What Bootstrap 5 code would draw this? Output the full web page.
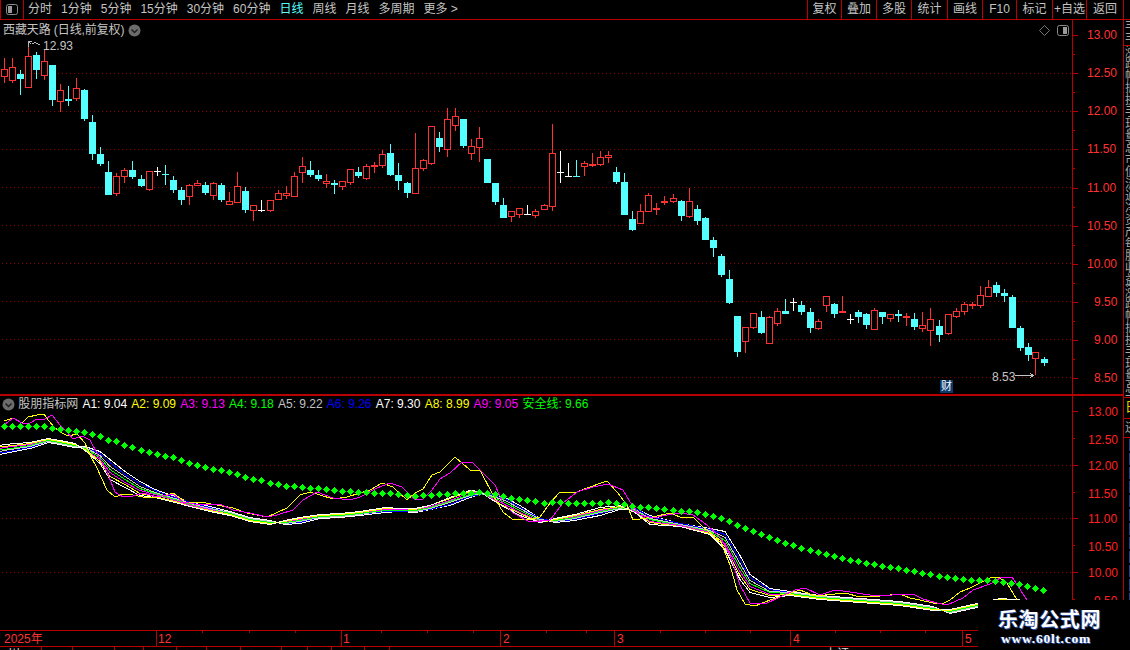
<!DOCTYPE html>
<html lang="zh">
<head>
<meta charset="UTF-8">
<title>西藏天路 日线</title>
<link href="https://cdn.jsdelivr.net/npm/bootstrap@5.3.0/dist/css/bootstrap.min.css" rel="stylesheet">
<style>
    :root { --line-red: #b80000; }
    html, body { background: #000; }
    body {
        width: 1130px; height: 650px; overflow: hidden; color: #c4c4c4;
        font: 12px/14px "Liberation Sans", "Noto Sans CJK SC", sans-serif;
    }
    svg { display: block; }
    svg text { font: 12px "Liberation Sans", "Noto Sans CJK SC", sans-serif; }

    .top-bar { height: 20px; border-bottom: 1px solid var(--line-red); }
    .toggle-cell { width: 24px; border-right: 1px solid var(--line-red); border-left: 1px solid var(--line-red); }
    .period-tabs { padding-left: 4px; gap: 9px; line-height: 19px; }
    .period-tabs .on { color: #54ffff; }
    .tool-btns {
        display: grid; grid-template-columns: 34px 35px 35px 36px 35px 34px 36px 34px 37px;
        border-right: 1px solid var(--line-red); margin-right: 6px; line-height: 19px;
    }
    .tool-btns span { border-left: 1px solid var(--line-red); text-align: center; }

    .charts { width: 1123px; }
    .pane-up { height: 376px; border-bottom: 2px solid var(--line-red); }
    .pane-down { height: 234px; }
    .legend-up { top: 3px; left: 3px; gap: 4px; letter-spacing: -.1px; }
    .legend-down { top: 1px; left: 2px; gap: 4.2px; }
    .legend-down b { font-weight: 400; }
    .legend-name { margin-left: -1px; }
    .date-row { height: 16px; }
    .status-row { height: 4px; border-top: 1px solid var(--line-red); }
    .status-row span { border-right: 1px solid var(--line-red); padding-left: 8px; line-height: 14px; color: #ddd; }

    .side-strip { width: 7px; border-left: 1px solid var(--line-red); }
    .side-cell { padding-left: 1px; line-height: 14px; border-bottom: 1px solid var(--line-red); color: #a8a8a8; }
    .side-cell.c-head { height: 26px; line-height: 12px; }
    .side-cell.c-list { height: 352px; line-height: 12px; }
    .side-cell.c-yel { height: 21px; color: #e6d800; line-height: 18px; font-size: 13px; }
    .side-cell.c-mid { height: 19px; line-height: 18px; }
    .side-cell.c-rest { flex: 1; border: 0; color: #e0e0e0; line-height: 14px; font-size: 13px; }

    .water-mark {
        right: 0; bottom: 0; width: 152px; height: 50px; background: #000; color: #fff;
        font-family: "Liberation Serif", "Noto Sans CJK SC", serif; font-weight: 700;
        text-shadow: 1px 1px 0 #2c4f9c, -1px 0 0 #1e3a7c;
    }
    .water-cn { font-size: 20px; line-height: 24px; letter-spacing: .6px; padding: 8px 0 0 20px; }
    .water-en { font-size: 13.5px; line-height: 16px; letter-spacing: .75px; padding-left: 23px; margin-top: -1px; }
    .cai-tag {
        left: 940px; top: 360px; width: 13px; height: 13px; background: #0a3a6e;
        color: #fff; font-size: 11px; line-height: 13px; text-align: center;
    }
</style>
</head>
<body>

<div class="top-bar d-flex">
    <div class="toggle-cell d-flex align-items-center justify-content-center">
        <svg width="12" height="11" viewBox="0 0 12 11"><rect x=".5" y=".5" width="11" height="10" rx="2" fill="none" stroke="#8a8a8a"/><rect x="2" y="2" width="4" height="7" fill="#9a9a9a"/></svg>
    </div>
    <div class="period-tabs d-flex flex-grow-1 text-nowrap">
        <span>分时</span><span>1分钟</span><span>5分钟</span><span>15分钟</span><span>30分钟</span><span>60分钟</span>
        <span class="on">日线</span><span>周线</span><span>月线</span><span>多周期</span><span>更多 &gt;</span>
    </div>
    <div class="tool-btns text-nowrap">
        <span>复权</span><span>叠加</span><span>多股</span><span>统计</span><span>画线</span><span>F10</span><span>标记</span><span>+自选</span><span>返回</span>
    </div>
</div>

<div class="d-flex">
    <div class="charts flex-shrink-0">
        <div class="pane-up d-flex position-relative">
            <svg id="plotUp" width="1072" height="374" viewBox="0 20 1072 374" shape-rendering="crispEdges"></svg>
            <svg id="axisUp" width="51" height="374" viewBox="1072 20 51 374" shape-rendering="crispEdges"></svg>
            <div class="legend-up position-absolute d-flex align-items-center text-nowrap">
                <span>西藏天路 (日线,前复权)</span>
                <svg width="13" height="13" viewBox="0 0 13 13"><circle cx="6.5" cy="6.5" r="6" fill="#6c6c6c"/><path d="M3.5 5.5l3 3 3-3" fill="none" stroke="#1c1c1c" stroke-width="1.4"/></svg>
            </div>
            <div class="cai-tag position-absolute">财</div>
            <svg class="position-absolute" style="left:1039px;top:5px" width="30" height="11" viewBox="0 0 30 11">
                <path d="M5.5 .5l5 5-5 5-5-5z" fill="none" stroke="#777"/>
                <rect x="18.5" y=".5" width="11" height="10" rx="2" fill="none" stroke="#8a8a8a"/><rect x="24" y="2" width="4" height="7" fill="#9a9a9a"/>
            </svg>
        </div>
        <div class="pane-down d-flex position-relative">
            <svg id="plotDown" width="1072" height="234" viewBox="0 396 1072 234" shape-rendering="crispEdges"></svg>
            <svg id="axisDown" width="51" height="234" viewBox="1072 396 51 234" shape-rendering="crispEdges"></svg>
            <div id="legendDown" class="legend-down position-absolute d-flex align-items-center text-nowrap">
                <svg width="13" height="13" viewBox="0 0 13 13"><circle cx="6.5" cy="6.5" r="6" fill="#6c6c6c"/><path d="M3.5 5.5l3 3 3-3" fill="none" stroke="#1c1c1c" stroke-width="1.4"/></svg>
                <span class="legend-name">股朋指标网</span>
            </div>
        </div>
        <div class="date-row"><svg id="dateAxis" width="1123" height="16" viewBox="0 630 1123 16" shape-rendering="crispEdges"></svg></div>
        <div class="status-row d-flex overflow-hidden text-nowrap">
            <span style="width:42px">川</span><span style="width:31px">·</span><span style="width:42px"></span><span style="width:29px"></span>
            <span style="width:33px"></span><span style="width:30px"></span><span style="width:34px"></span><span style="width:41px"></span>
            <span style="width:26px"></span><span style="width:24px"></span><span style="width:33px"></span><span style="width:25px"></span>
            <span class="flex-grow-1 border-0" style="padding-left:435px">上证</span>
        </div>
    </div>
    <div class="side-strip d-flex flex-column overflow-hidden text-nowrap" style="height:630px">
        <div class="side-cell c-head">丰<br>丰</div>
        <div id="sideList" class="side-cell c-list overflow-hidden"></div>
        <div class="side-cell c-yel overflow-hidden">日</div>
        <div class="side-cell c-mid overflow-hidden">还</div>
        <div id="sideRest" class="side-cell c-rest overflow-hidden"></div>
    </div>
</div>

<div class="water-mark position-absolute text-nowrap">
    <div class="water-cn">乐淘公式网</div>
    <div class="water-en">www.60lt.com</div>
</div>

<script>
const RED = '#ff3232', CYAN = '#54ffff', WHITE = '#ffffff', DIM = '#8a0000', LINE = '#b80000';

// x, high, body top, body bottom, low, type (page pixels)
const candles = [
[4,58,69,77,83,'r'],[12,58,67,81,83,'r'],[20,70,74,79,95,'c'],[28,42,56,88,88,'r'],[36,52,55,70,79,'c'],[44,50,61,76,80,'r'],
[52,65,65,100,106,'c'],[60,84,90,102,112,'r'],[68,86,99,101,106,'t'],[76,78,88,99,101,'r'],[84,89,90,119,121,'c'],[92,115,122,154,160,'c'],
[100,147,154,164,166,'c'],[108,161,172,195,195,'c'],[116,173,176,194,196,'r'],[124,168,170,177,183,'r'],[132,161,170,177,179,'c'],[141,175,179,186,187,'c'],
[149,171,171,190,191,'r'],[157,167,171,172,176,'w'],[165,165,174,175,185,'t'],[173,176,180,190,193,'c'],[181,187,190,200,205,'c'],[189,184,185,197,205,'r'],
[197,180,183,186,186,'r'],[205,182,185,193,195,'c'],[213,182,183,196,200,'r'],[221,183,185,200,202,'c'],[229,192,201,205,205,'r'],[237,172,186,203,203,'r'],
[245,187,191,210,213,'c'],[253,205,205,211,221,'r'],[261,200,210,211,212,'w'],[270,200,200,211,212,'r'],[278,190,193,200,200,'r'],[286,186,193,196,199,'r'],
[294,172,176,197,197,'r'],[302,157,166,173,183,'r'],[310,161,170,175,177,'c'],[318,170,175,179,181,'c'],[326,174,181,184,188,'r'],[334,180,183,185,194,'t'],
[342,181,181,187,190,'r'],[350,169,169,183,185,'r'],[358,167,172,176,178,'c'],[366,164,166,179,180,'r'],[374,162,165,167,173,'d'],[382,150,154,166,168,'r'],
[390,144,153,175,176,'c'],[398,163,175,181,190,'c'],[407,182,183,193,198,'c'],[415,133,168,194,194,'r'],[423,159,160,169,171,'r'],[431,126,126,164,165,'r'],
[439,132,138,147,152,'c'],[447,108,119,150,157,'r'],[455,108,116,126,131,'r'],[463,119,119,146,148,'c'],[471,139,146,154,160,'r'],[479,127,138,148,162,'r'],
[487,159,159,183,183,'c'],[495,183,183,202,205,'c'],[503,198,205,218,218,'c'],[511,211,211,217,222,'r'],[519,208,208,215,218,'r'],[527,205,214,215,215,'w'],
[535,209,211,216,218,'r'],[544,204,205,210,210,'r'],[552,124,153,207,211,'r'],[560,151,172,173,183,'w'],[568,163,176,177,177,'w'],[576,160,176,177,177,'t'],
[584,161,163,167,176,'r'],[592,153,164,165,167,'d'],[600,151,157,165,166,'r'],[608,151,155,158,163,'r'],[616,167,172,182,184,'c'],[624,173,182,215,215,'c'],
[632,211,219,230,231,'c'],[640,204,211,224,224,'r'],[648,193,195,212,212,'r'],[656,203,208,209,215,'d'],[664,196,201,202,205,'d'],[673,194,198,202,203,'r'],
[681,200,201,216,221,'c'],[689,188,201,217,218,'r'],[697,205,209,221,225,'c'],[705,217,218,240,240,'c'],[713,237,240,248,257,'c'],[721,254,256,275,277,'c'],
[729,270,279,303,304,'c'],[737,316,316,352,357,'c'],[745,327,327,342,353,'r'],[753,313,313,328,329,'r'],[761,311,317,333,334,'c'],[769,316,317,344,344,'r'],
[777,308,311,324,326,'r'],[785,299,311,314,314,'c'],[793,298,302,303,311,'w'],[801,301,305,312,315,'c'],[810,308,312,328,333,'c'],[818,319,321,329,330,'r'],
[826,296,296,306,312,'r'],[834,303,304,314,318,'c'],[842,296,311,312,312,'d'],[850,314,319,320,324,'w'],[858,310,312,317,323,'c'],[866,313,314,325,329,'c'],
[874,308,310,330,330,'r'],[882,312,312,317,324,'c'],[890,314,314,319,322,'r'],[898,310,314,316,322,'t'],[906,313,316,317,326,'d'],[914,313,319,327,330,'c'],
[922,312,325,329,332,'r'],[930,308,319,331,346,'r'],[939,320,326,335,342,'c'],[948,314,314,334,335,'r'],[956,308,311,317,318,'r'],[964,302,304,312,315,'r'],
[972,302,304,305,309,'d'],[980,286,295,306,308,'r'],[988,280,287,297,297,'r'],[996,282,285,293,297,'c'],[1004,289,293,296,302,'c'],[1012,295,297,328,328,'c'],
[1020,326,328,348,351,'c'],[1028,343,347,355,361,'c'],[1035,352,352,359,375,'r'],[1044,357,359,363,366,'c']
];

// x, centre y, offset between neighbouring lines (A1..A7)
const ribbon = [
[0,449,1.5],[4,448.5,1.5],[30,445,1],[48,440,.6],[60,442,.6],[75,445,.6],[85,448,-.6],[100,457,-1.9],[110,469,-3.3],[125,479,-2.6],[140,488,-2.3],
[155,493,-1.3],[175,499,-1],[190,504,-.8],[210,508.5,-.7],[230,513,-.7],[250,519,-.7],[270,522,-.6],[285,522,.6],[300,520,.9],[320,516,.6],[340,515,.6],
[360,513,.6],[385,509.5,.8],[400,509.5,.6],[415,510,.6],[430,507,.8],[450,501,1.3],[470,493.5,1.1],[480,492.5,.6],[490,496,-.8],[505,502,-1.8],[520,510,-1.7],
[540,520,-.8],[555,520,.6],[575,517,1.1],[600,511,1.2],[620,507,.7],[635,510,-.8],[650,519,-1.5],[680,524.5,-.6],[710,531,-1],[725,540,-3],[740,567,-4],
[750,583,-3],[770,592,-1.5],[790,593,-.6],[820,597,-.6],[860,600,-.6],[900,603,-.6],[933,608,-.6],[950,611,.6],[977,605,.7],[1000,600,.6],[1040,603,.6]
];

const lineA8 = [[4,421],[13,418],[22,423],[28,417],[37,415],[44,414],[48,420],[55,428],[62,433],[68,436],[77,434],[85,443],[90,455],[97,468],[107,490],[115,497],[123,494],[133,495],[143,497],[160,497],[173,493],[187,503],[200,502],[217,505],[233,508],[247,513],[267,517],[287,508],[300,495],[310,492],[333,499],[347,497],[360,493],[370,490],[382,483],[393,487],[407,500],[415,493],[423,489],[432,475],[440,472],[455,457],[470,470],[480,470],[493,495],[503,512],[512,519],[527,520],[540,517],[550,503],[560,492],[577,492],[587,488],[607,481],[617,492],[627,505],[633,520],[647,518],[653,517],[670,513],[680,517],[693,517],[703,527],[713,535],[720,540],[730,565],[737,590],[745,604],[755,606],[770,600],[785,595],[800,590],[815,596],[825,595],[845,593],[860,597],[880,596],[900,594],[910,598],[920,600],[933,603],[942,604],[950,600],[960,592],[970,588],[980,583],[990,578],[998,577],[1007,583],[1017,600],[1030,620]];
const lineA9 = [[4,425],[13,418],[22,423],[30,423],[37,419],[45,419],[52,415],[60,425],[67,432],[73,439],[82,436],[90,440],[98,455],[107,472],[115,492],[123,497],[133,496],[143,493],[157,497],[173,494],[183,502],[200,505],[220,504],[233,510],[250,513],[267,517],[277,515],[293,510],[303,500],[317,492],[333,498],[350,500],[360,497],[377,488],[390,483],[402,487],[415,500],[423,499],[432,490],[440,479],[450,473],[462,462],[473,463],[483,473],[495,485],[503,503],[513,513],[530,522],[550,520],[563,503],[577,492],[593,487],[608,484],[623,490],[630,502],[640,515],[653,518],[667,515],[680,513],[693,515],[707,525],[720,537],[730,555],[740,585],[750,603],[765,604],[780,597],[795,590],[805,588],[820,595],[835,590],[850,592],[870,595],[885,596],[900,594],[915,595],[923,599],[937,603],[947,605],[963,598],[973,590],[990,584],[1002,577],[1012,577],[1027,600],[1040,620]];

const safeLine = [[4,426],[12,426],[20,426],[28,426],[36,426],[44,426],[52,428],[60,429],[68,430],[76,431],[84,432],[92,434],[100,436],[108,440],[116,441],[124,445],[132,447],[141,450],[149,452],[157,454],[165,456],[173,457],[181,460],[189,463],[197,465],[205,467],[213,469],[221,470],[229,472],[237,474],[245,477],[253,479],[261,480],[270,483],[278,484],[286,486],[294,486],[302,487],[310,488],[318,488],[326,489],[334,490],[342,491],[350,491],[358,492],[366,492],[374,493],[382,493],[390,493],[398,494],[407,495],[415,496],[423,495],[431,495],[439,494],[447,494],[455,493],[463,493],[471,493],[479,492],[487,493],[495,494],[503,496],[511,498],[519,499],[527,500],[535,501],[544,503],[552,502],[560,502],[568,503],[576,503],[584,503],[592,503],[600,503],[608,502],[616,503],[624,504],[632,506],[640,507],[648,507],[656,508],[664,509],[673,510],[681,511],[689,511],[697,512],[705,514],[713,516],[721,518],[729,521],[737,525],[745,528],[753,531],[761,534],[769,537],[777,540],[785,543],[793,545],[801,548],[810,550],[818,552],[826,554],[834,556],[842,558],[850,560],[858,561],[866,563],[874,564],[882,566],[890,567],[898,568],[906,570],[914,571],[922,573],[930,574],[939,576],[947,577],[955,578],[963,579],[971,580],[979,580],[987,580],[995,581],[1003,582],[1011,583],[1019,584],[1027,586],[1035,588],[1043,590]];

function rect(x, y, w, h, c) { return `<rect x="${x}" y="${y}" width="${w}" height="${h}" fill="${c}"/>`; }
function dotted(y, x2) {
    let d = '';
    for (let x = 2; x < x2; x += 4) d += `M${x} ${y}h1v1h-1z`;
    return `<path d="${d}" fill="${DIM}"/>`;
}
function poly(pts, c) { return `<polyline points="${pts.map(p => p.join(',')).join(' ')}" fill="none" stroke="${c}"/>`; }
function txt(x, y, s, c, extra) { return `<text x="${x}" y="${y}" fill="${c}" shape-rendering="auto" ${extra || ''}>${s}</text>`; }

// upper pane
let up = '';
[73, 111, 149, 187, 225, 263, 301, 339, 377].forEach(y => { up += dotted(y, 1072); });
candles.forEach(([x, hi, top, bot, lo, t]) => {
    const col = (t === 'r' || t === 'd') ? RED : t === 'w' ? WHITE : CYAN;
    up += rect(x, hi, 1, lo - hi, col);
    if (t === 'r') {
        up += rect(x - 3, top, 7, bot - top, '#000');
        up += `<rect x="${x - 2.5}" y="${top + .5}" width="6" height="${bot - top - 1}" fill="none" stroke="${RED}"/>`;
    } else {
        up += rect(x - 3, top, 7, t === 'd' ? 2 : bot - top, col);
    }
});
// high and low marks
up += `<path d="M28.5 47V41.5h3M28.5 41.5l3 3M32 44l3-1.500 5 2.500" fill="none" stroke="#b8b8b8"/>`;
up += txt(43, 50, '12.93', '#c4c4c4');
up += txt(992, 381, '8.53', '#c4c4c4');
up += `<path d="M1015 375.500H1033M1030 373l3 2.500-3 2.500" fill="none" stroke="#c4c4c4"/>`;
plotUp.innerHTML = up;

let axUp = rect(1072, 20, 1, 374, LINE);
['13.00', '12.50', '12.00', '11.50', '11.00', '10.50', '10.00', '9.50', '9.00', '8.50'].forEach((s, i) => {
    const y = Math.round(35 + i * 38.15);
    axUp += rect(1072, y, 6, 1, LINE);
    if (i < 9) axUp += rect(1072, Math.round(y + 19), 3, 1, LINE);
    axUp += txt(s.length > 4 ? 1087 : 1094, y + 4, s, RED);
});
axisUp.innerHTML = axUp;

// lower pane
let down = '';
[465, 518, 572].forEach(y => { down += dotted(y, 1072); });
[[6, WHITE], [5, '#0000ff'], [4, '#c8c8c8'], [3, '#00ff00'], [2, '#ff00ff'], [1, '#ffff00'], [0, WHITE]].forEach(([k, c]) => {
    // k runs A7 down to A1, offset measured from the middle line
    down += poly(ribbon.map(([x, mid, s]) => [x, Math.round(mid + (k - 3) * s) + .5]), c);
});
down += poly(lineA8, '#ffff00') + poly(lineA9, '#ff00ff');
safeLine.forEach(([x, y]) => {
    const cx = x + .5, cy = y + .5, r = 3.4;
    down += `<polygon points="${cx},${cy - r} ${cx + r},${cy} ${cx},${cy + r} ${cx - r},${cy}" fill="#00ff00"/>`;
});
plotDown.innerHTML = down;

let axDown = rect(1072, 396, 1, 234, LINE);
[['13.00', 411, 1], ['12.50', 438, 0], ['12.00', 465, 1], ['11.50', 492, 0], ['11.00', 518, 1], ['10.50', 545, 0], ['10.00', 572, 1], ['9.50', 599, 0]].forEach(([s, y, big]) => {
    axDown += rect(1072, y, big ? 6 : 3, 1, LINE);
    axDown += txt(s.length > 4 ? 1088 : 1094, y + (big ? 5 : 6), s, '#ff2020');
});
axisDown.innerHTML = axDown;

const legendItems = [['A1', '9.04', '#ffffff'], ['A2', '9.09', '#ffff00'], ['A3', '9.13', '#ff00ff'], ['A4', '9.18', '#00ff00'], ['A5', '9.22', '#c0c0c0'],
    ['A6', '9.26', '#0000ff'], ['A7', '9.30', '#ffffff'], ['A8', '8.99', '#ffff00'], ['A9', '9.05', '#ff00ff'], ['安全线', '9.66', '#00ff00']];
legendItems.forEach(([k, v, c]) => {
    const el = document.createElement('b');
    el.textContent = `${k}: ${v}`;
    el.style.color = c;
    legendDown.appendChild(el);
});

// date axis
let dates = rect(0, 630, 1123, 1, LINE);
[[4, '2025年', 0], [158, '12', 156], [343, '1', 341], [503, '2', 500], [617, '3', 614], [793, '4', 790], [965, '5', 962]].forEach(([x, s, line]) => {
    if (line) dates += rect(line, 630, 1, 16, LINE);
    dates += txt(x, 643, s, RED);
});
[202, 249, 295, 381, 427, 473, 546, 586, 660, 705, 750, 835, 880, 925].forEach(x => { dates += rect(x, 631, 1, 2, LINE); });
dateAxis.innerHTML = dates;

// right side strip, only the left edge of its rows is visible
sideList.innerHTML = '涨跌幅振换手现量总市值流通净资产每股收益涨跌幅振换手现量总市值'.split('').join('<br>');
sideRest.innerHTML = Array(14).fill('卜').join('<br>');
</script>

<script src="https://cdn.jsdelivr.net/npm/bootstrap@5.3.0/dist/js/bootstrap.bundle.min.js"></script>
</body>
</html>
